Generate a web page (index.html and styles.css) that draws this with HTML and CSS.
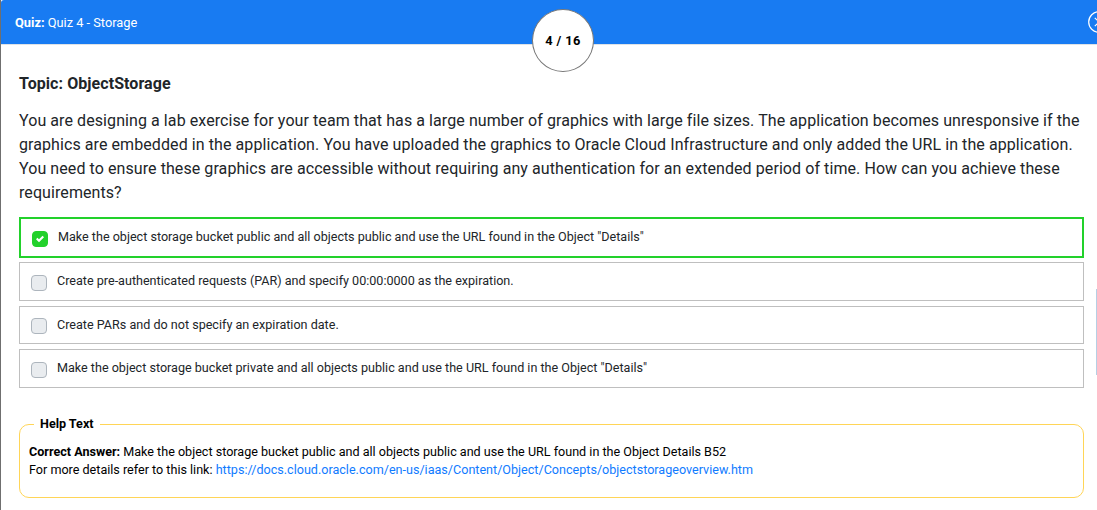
FILE: index.html
```
<!DOCTYPE html>
<html lang="en">
<head>
<meta charset="utf-8">
<title>Quiz 4 - Storage</title>
<link rel="stylesheet" href="styles.css">
</head>
<body>
<div class="modal">
  <header class="header">
    <div class="quiz-name"><b>Quiz:</b> Quiz 4 - Storage</div>
    <div class="counter">4 / 16</div>
    <svg class="close" viewBox="0 0 22 22" width="22" height="22"><circle cx="11" cy="11" r="10.3"/><path d="M6.8 6.8l8.4 8.4M15.2 6.8l-8.4 8.4"/></svg>
  </header>
  <main class="content">
    <h1 class="topic">Topic: ObjectStorage</h1>
    <p class="question">You are designing a lab exercise for your team that has a large number of graphics with large file sizes. The application becomes unresponsive if the<br>graphics are embedded in the application. You have uploaded the graphics to Oracle Cloud Infrastructure and only added the URL in the application.<br>You need to ensure these graphics are accessible without requiring any authentication for an extended period of time. How can you achieve these<br>requirements?</p>
    <div class="options">
      <div class="option correct"><span class="box"><svg viewBox="0 0 8 8" width="8" height="8"><path d="M6.564.75l-3.59 3.612-1.538-1.55L0 4.26 2.974 7.25 8 2.193z"/></svg></span><span class="label">Make the object storage bucket public and all objects public and use the URL found in the Object "Details"</span></div>
      <div class="option"><span class="box"></span><span class="label">Create pre-authenticated requests (PAR) and specify 00:00:0000 as the expiration.</span></div>
      <div class="option short"><span class="box"></span><span class="label">Create PARs and do not specify an expiration date.</span></div>
      <div class="option"><span class="box"></span><span class="label">Make the object storage bucket private and all objects public and use the URL found in the Object "Details"</span></div>
    </div>
    <fieldset class="help">
      <legend>Help Text</legend>
      <div><b>Correct Answer:</b> Make the object storage bucket public and all objects public and use the URL found in the Object Details B52</div>
      <div>For more details refer to this link: <a>https://docs.cloud.oracle.com/en-us/iaas/Content/Object/Concepts/objectstorageoverview.htm</a></div>
    </fieldset>
  </main>
  <div class="scroll-thumb"></div>
</div>
</body>
</html>
```
FILE: styles.css
```
* { box-sizing: border-box; }
body { margin: 0; font-family: Roboto, sans-serif; color: #212529; background: #fff; overflow: hidden; }
.modal { position: relative; height: 510px; border-left: 1px solid #6f6f6f; overflow: hidden; }
.header { position: relative; height: 45px; padding: 14px 14px 0; background: #187bf2; border-bottom: 1px solid #dee2e6; border-top-left-radius: 3px; color: #fff; }
.quiz-name { font-size: 12.8px; line-height: 18px; }
.counter { position: absolute; left: 531px; top: 9px; width: 62px; height: 63px; border: 1px solid #777; border-radius: 50%; background: #fff; color: #000; font-size: 12.8px; font-weight: 700; line-height: 62px; text-align: center; letter-spacing: .4px; }
.close { position: absolute; left: 1087px; top: 11px; fill: none; stroke: #fff; stroke-width: 1.2; }
.content { padding: 28px 13px 0 18px; }
.topic { margin: 0; font-size: 16px; line-height: 22px; font-weight: 700; letter-spacing: .07px; }
.question { margin: 14px 0 0; font-size: 16px; line-height: 24px; white-space: nowrap; letter-spacing: .08px; }
.options { padding-top: 12px; }
.option { display: flex; height: 39px; margin-bottom: 5px; padding: 0 11px; border: 1px solid #bfbfbf; font-size: 12.58px; line-height: 18px; }
.option .box { width: 16px; height: 16px; margin-top: 12px; border: 1px solid #adb5bd; border-radius: 4px; background: #e9ecef; }
.option .label { margin: 9px 0 0 10px; white-space: nowrap; }
.option.short { height: 38px; }
.option.short .box { margin-top: 11px; }
.option.correct { height: 41px; margin-bottom: 4px; border: 2px solid #22d12b; }
.option.correct .box { display: flex; align-items: center; justify-content: center; border-color: #22d12b; background: #22d12b; }
.option.correct svg { fill: #fff; }
.help { height: 83px; margin: 27px 0 0; padding: 10px 9px 0; border: 1px solid #ffd557; border-radius: 10px; color: #000; font-size: 12.58px; line-height: 18px; white-space: nowrap; }
.help legend { margin-left: 5px; padding: 0 6px; font-weight: 700; }
.help a { color: #107bff; }
.scroll-thumb { position: absolute; right: 0; top: 289px; width: 1px; height: 86px; background: #b6cfe4; }
```
